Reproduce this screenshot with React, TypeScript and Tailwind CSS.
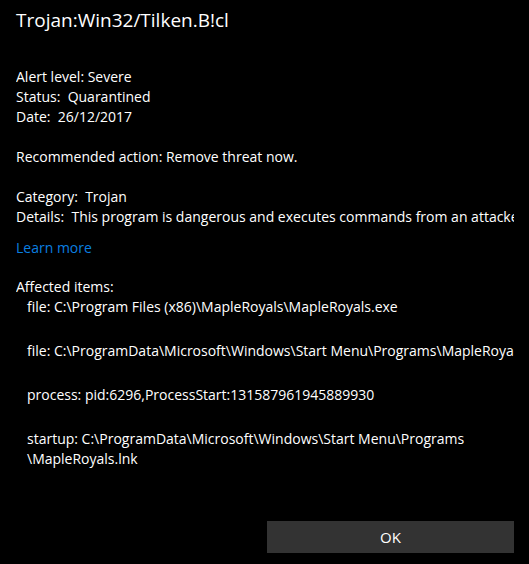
import React from "react";

const affected = [
  { id: "f1", lines: ["file: C:\\Program Files (x86)\\MapleRoyals\\MapleRoyals.exe"] },
  {
    id: "f2",
    lines: ["file: C:\\ProgramData\\Microsoft\\Windows\\Start Menu\\Programs\\MapleRoyals\\MapleRoyals.lnk"],
  },
  { id: "p1", lines: ["process: pid:6296,ProcessStart:131587961945889930"] },
  {
    id: "s1",
    lines: ["startup: C:\\ProgramData\\Microsoft\\Windows\\Start Menu\\Programs", "\\MapleRoyals.lnk"],
  },
];

const App = () => {
  return (
    <div
      className="w-[529px] h-[564px] bg-black text-white flex flex-col overflow-hidden"
      style={{ fontFamily: '"Open Sans", "Noto Sans", sans-serif' }}
    >
      <div className="pl-4 pr-[15px] pt-[6px] flex-1 overflow-hidden">
        <div className="text-[19px] leading-[28px] whitespace-nowrap">Trojan:Win32/Tilken.B!cl</div>

        <div className="mt-[33px] text-[14px] leading-5 whitespace-nowrap overflow-hidden">
          <p>Alert level: Severe</p>
          <p>Status:&nbsp; Quarantined</p>
          <p>Date:&nbsp; 26/12/2017</p>

          <p className="mt-5">Recommended action: Remove threat now.</p>

          <p className="mt-5">Category:&nbsp; Trojan</p>
          <p>Details:&nbsp; This program is dangerous and executes commands from an attacker.</p>

          <p className="mt-[11px] text-[#0a7fe0]">Learn more</p>

          <p className="mt-[19px]">Affected items:</p>
          <div className="pl-[11px]">
            {affected.map((a) => (
              <div className="mb-6" key={a.id}>
                {a.lines.map((l) => (
                  <p key={l}>{l}</p>
                ))}
              </div>
            ))}
          </div>
        </div>
      </div>

      <div className="flex justify-end pr-[15px] pb-[11px]">
        <button className="w-[247px] h-8 bg-[#333333] text-white text-[15px]">OK</button>
      </div>
    </div>
  );
};

export default App;
